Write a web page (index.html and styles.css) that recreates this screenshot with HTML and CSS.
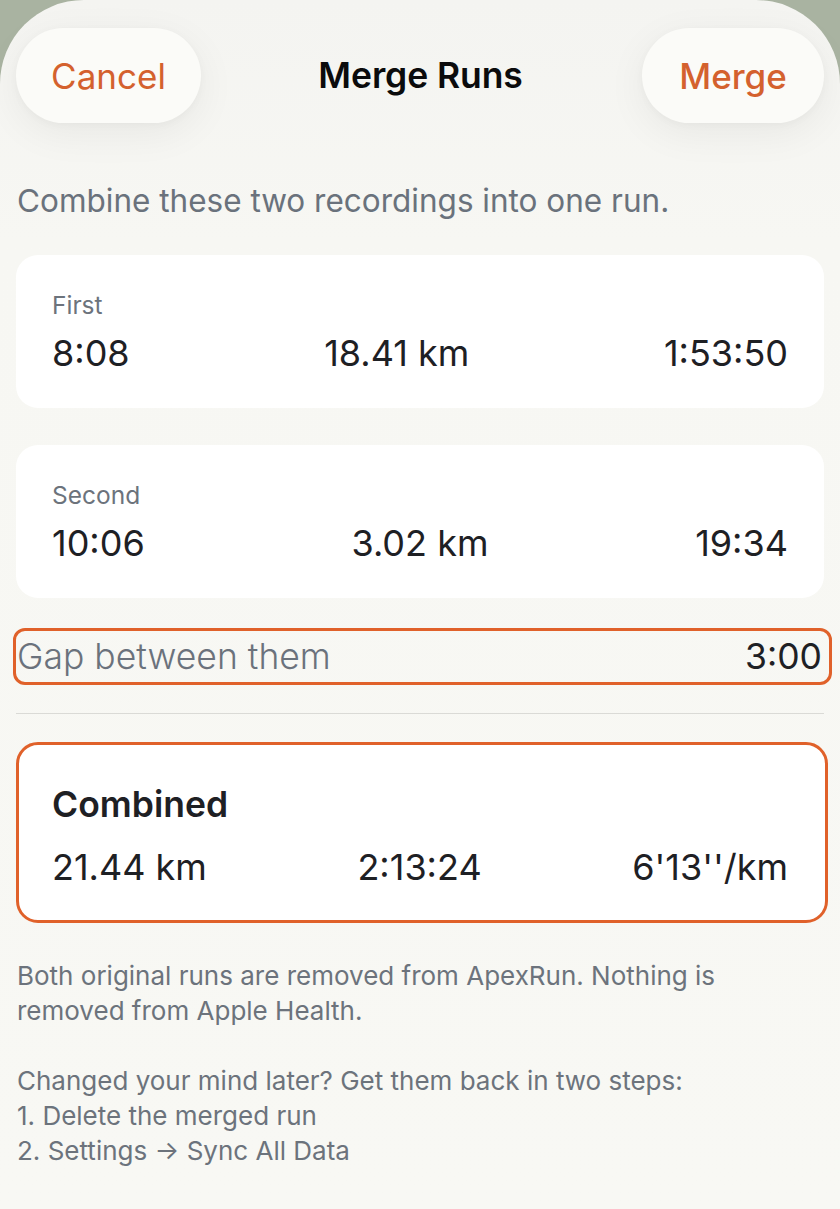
FILE: index.html
```html
<!DOCTYPE html>
<html lang="en">
<head>
<meta charset="utf-8">
<title>Merge Runs</title>
<link rel="stylesheet" href="styles.css">
</head>
<body>
<div class="sheet">
  <header class="topbar">
    <button class="pill pill-cancel">Cancel</button>
    <h1 class="title">Merge Runs</h1>
    <button class="pill pill-merge">Merge</button>
  </header>

  <p class="intro">Combine these two recordings into one run.</p>

  <section class="card">
    <div class="card-label">First</div>
    <div class="stats">
      <span>8:08</span>
      <span>18.41 km</span>
      <span>1:53:50</span>
    </div>
  </section>

  <section class="card card-second">
    <div class="card-label">Second</div>
    <div class="stats">
      <span>10:06</span>
      <span>3.02 km</span>
      <span>19:34</span>
    </div>
  </section>

  <div class="gap-row">
    <span class="gap-label">Gap between them</span>
    <span class="gap-value">3:00</span>
  </div>

  <hr class="divider">

  <section class="combined">
    <div class="combined-title">Combined</div>
    <div class="stats">
      <span>21.44 km</span>
      <span>2:13:24</span>
      <span>6'13''/km</span>
    </div>
  </section>

  <p class="note">Both original runs are removed from ApexRun. Nothing is removed from Apple Health.</p>
  <p class="note note-steps">Changed your mind later? Get them back in two steps:<br>1. Delete the merged run<br>2. Settings → Sync All Data</p>
</div>
</body>
</html>
```

FILE: styles.css
```css
html, body {
  margin: 0;
  padding: 0;
}

body {
  background: #a9b3a1;
  font-family: Inter, "Noto Sans", "Liberation Sans", sans-serif;
  width: 840px;
  height: 1209px;
  overflow: hidden;
}

.sheet {
  background: linear-gradient(#f4f4f1 0px, #f7f7f3 240px, #f8f8f4 100%);
  border-radius: 84px 84px 0 0;
  height: 1209px;
  box-sizing: border-box;
  padding: 28px 16px 0 16px;
}

.topbar {
  display: flex;
  align-items: center;
  justify-content: space-between;
  height: 95px;
}

.pill {
  height: 95px;
  border: none;
  border-radius: 48px;
  background: #fbfbf8;
  box-shadow: 0 10px 40px rgba(0, 0, 0, 0.06), 0 2px 8px rgba(0, 0, 0, 0.03);
  color: #d4612e;
  font-family: inherit;
  font-size: 35px;
  padding: 0;
  cursor: pointer;
}

.pill-cancel {
  width: 185px;
  font-weight: 400;
}

.pill-merge {
  width: 182px;
  font-weight: 500;
}

.title {
  margin: 0 0 0 -2px;
  font-size: 35.5px;
  font-weight: 600;
  color: #0b0b0c;
  letter-spacing: -0.1px;
}

.intro {
  margin: 60px 0 0 1px;
  font-size: 31.5px;
  line-height: 36px;
  color: #6a727c;
}

.card {
  margin-top: 36px;
  background: #ffffff;
  border-radius: 22px;
  padding: 36px 36px 35px 36px;
}

.card-second {
  margin-top: 37px;
}

.card-label {
  font-size: 24.5px;
  line-height: 28px;
  color: #6c737c;
}

.stats {
  display: flex;
  justify-content: space-between;
  font-size: 36px;
  line-height: 40px;
  color: #1e2024;
}

.card .stats {
  margin-top: 14px;
}

.gap-row {
  margin: 30px -8px 0 -3px;
  border: 3px solid #e0612a;
  border-radius: 12px;
  display: flex;
  justify-content: space-between;
  align-items: center;
  height: 51px;
  padding: 0 7px 0 1px;
  font-size: 35.5px;
  line-height: 40px;
}

.gap-label {
  color: #6b727c;
  font-weight: 300;
}

.gap-value {
  color: #1e2024;
}

.divider {
  margin: 28px 0 0 0;
  border: none;
  border-top: 1px solid #dadad6;
  height: 0;
}

.combined {
  margin: 28px -4px 0 0;
  border: 3px solid #e0612a;
  border-radius: 22px;
  background: #ffffff;
  padding: 40px 37px 33px 33px;
}

.combined-title {
  font-size: 35.5px;
  line-height: 40px;
  font-weight: 600;
  color: #1e2024;
}

.combined .stats {
  margin-top: 22px;
}

.note {
  margin: 35px 0 0 1px;
  font-size: 26px;
  line-height: 35px;
  color: #6c737c;
  padding-right: 70px;
}

.note-steps {
  margin-top: 35px;
}
```
